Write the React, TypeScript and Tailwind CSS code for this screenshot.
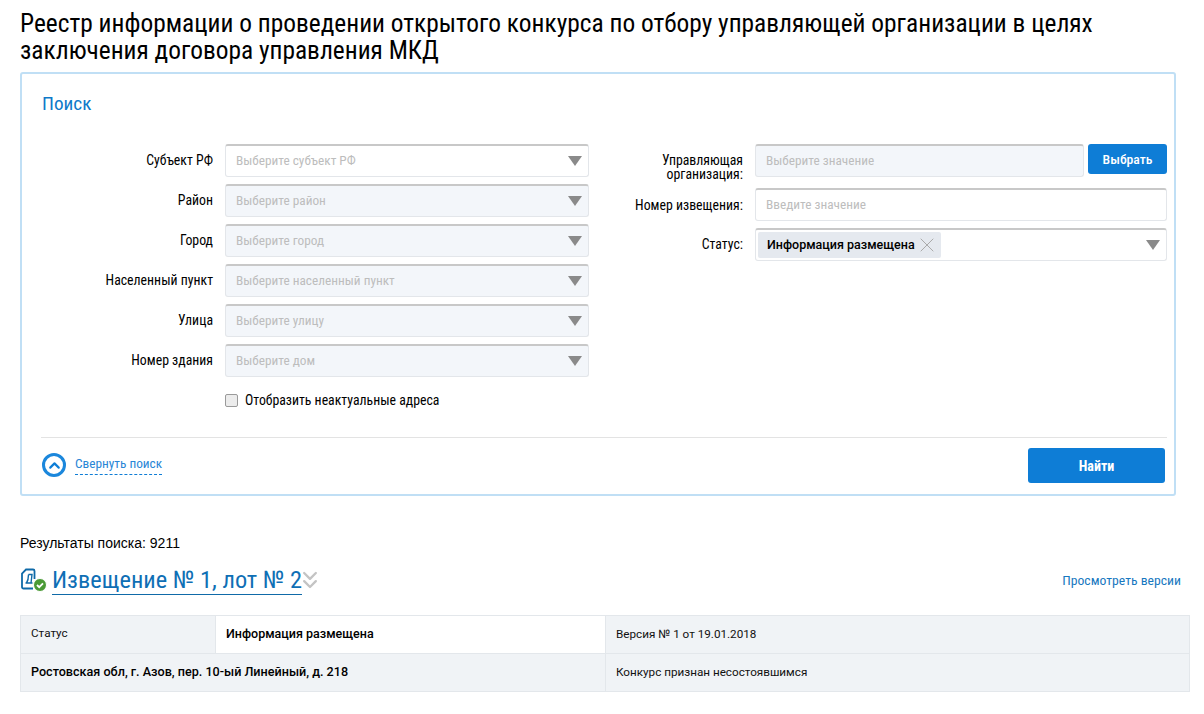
import { ChevronUp, ChevronsDown, X } from "lucide-react"

const roboto = "font-['Roboto',sans-serif] [font-stretch:75%]"

function Arrow() {
  return <span className="ml-auto mr-[6px] h-0 w-0 border-x-[7px] border-t-[10px] border-x-transparent border-t-[#8a8a8a]" />
}

function FieldLabel({ children }: { children: React.ReactNode }) {
  return <div className="w-[172px] pb-[1px] text-right text-[13.800px] leading-[14px] text-black">{children}</div>
}

function Field({ label, placeholder, disabled }: { label: string; placeholder: string; disabled?: boolean }) {
  return (
    <div className="flex h-[33px] items-center gap-[12px]">
      <FieldLabel>{label}</FieldLabel>
      <div
        className={`flex h-[33px] w-[364px] items-center rounded-[3px] border border-[#e3e6ea] border-t-2 border-t-[#c8c8c8] pl-[10px] ${
          disabled ? "bg-[#f3f6fa]" : "bg-white"
        }`}
      >
        <span className="text-[13.300px] text-[#bdbdbd]">{placeholder}</span>
        <Arrow />
      </div>
    </div>
  )
}

const fields = [
  { label: "Субъект РФ", placeholder: "Выберите субъект РФ" },
  { label: "Район", placeholder: "Выберите район", disabled: true },
  { label: "Город", placeholder: "Выберите город", disabled: true },
  { label: "Населенный пункт", placeholder: "Выберите населенный пункт", disabled: true },
  { label: "Улица", placeholder: "Выберите улицу", disabled: true },
  { label: "Номер здания", placeholder: "Выберите дом", disabled: true },
]

function NoticeIcon() {
  return (
    <svg width="27" height="24" viewBox="0 0 27 24" fill="none" className="shrink-0">
      <path d="M13 20.500H3.500a1.500 1.500 0 0 1-1.500-1.500V5.500L6 1.500h7a1.500 1.500 0 0 1 1.500 1.500V11" stroke="#0f6aa8" strokeWidth="1.800" />
      <path d="M8.500 6.500h3.500l-1 8.500M5.500 15h7M8.500 6.500c0 4-.7 6.500-2 8.500" stroke="#0f6aa8" strokeWidth="1.400" />
      <circle cx="20" cy="17" r="6.500" fill="#4a9a35" stroke="#fff" />
      <path d="M17 17l2.200 2.200L23 15.300" stroke="#fff" strokeWidth="1.800" />
    </svg>
  )
}

export default function App() {
  return (
    <div className={`min-h-[714px] bg-white px-[20px] pt-[10px] ${roboto}`}>
      <h1 className="w-[1130px] text-[25.400px] leading-[27px] text-black">
        Реестр информации о проведении открытого конкурса по отбору управляющей организации в целях заключения договора
        управления МКД
      </h1>

      <div className="mt-[8px] h-[424px] w-[1156px] rounded-[3px] border-2 border-[#c0dff5] pl-[19px] pr-[7px]">
        <div className="pl-[1px] pt-[18px] text-[19.200px] leading-[24px] text-[#0e79c9]">Поиск</div>

        <div className="mt-[28px] flex h-[294px] border-b border-[#e3e3e3]">
          <div className="flex flex-col gap-[7px]">
            {fields.map((f) => (
              <Field key={f.label} {...f} />
            ))}
            <label className="mt-[9px] flex items-center gap-[7px] pl-[184px]">
              <span className="h-[13px] w-[13px] rounded-[2px] border border-[#9a9a9a] bg-[#ececec]" />
              <span className="text-[13.800px] leading-[14px] text-black">Отобразить неактуальные адреса</span>
            </label>
          </div>

          <div className="ml-[36px] flex flex-col gap-[11px]">
            <div className="flex h-[33px] items-start gap-[12px]">
              <div className="w-[118px] pt-[9px] text-right text-[13.800px] leading-[14px] text-black">
                Управляющая организация:
              </div>
              <div className="flex h-[33px] w-[329px] items-center rounded-[3px] border border-[#e3e6ea] border-t-2 border-t-[#c8c8c8] bg-[#f3f6fa] pl-[10px]">
                <span className="text-[13.300px] text-[#bdbdbd]">Выберите значение</span>
              </div>
              <button className="-ml-[8px] h-[30px] w-[79px] rounded-[3px] bg-[#0e7dd6] text-[13.700px] font-medium text-white">
                Выбрать
              </button>
            </div>
            <div className="flex items-center gap-[12px]">
              <div className="w-[118px] text-right text-[13.800px] leading-[14px] text-black">Номер извещения:</div>
              <div className="flex h-[33px] w-[412px] items-center rounded-[3px] border border-[#e3e6ea] border-t-2 border-t-[#c8c8c8] bg-white pl-[10px]">
                <span className="text-[13.300px] text-[#bdbdbd]">Введите значение</span>
              </div>
            </div>
            <div className="-mt-[4px] flex items-center gap-[12px]">
              <div className="w-[118px] pb-[1px] text-right text-[13.800px] leading-[14px] text-black">Статус:</div>
              <div className="flex h-[33px] w-[412px] items-center rounded-[3px] border border-[#e3e6ea] border-t-2 border-t-[#c8c8c8] bg-white pl-[2px]">
                <div className="flex h-[26px] w-[183px] items-center rounded-[2px] bg-[#e5e9ef] pl-[9px]">
                  <span className="text-[12.500px] font-medium text-black [font-stretch:100%]">Информация размещена</span>
                  <X size={24} strokeWidth={1} className="text-[#aaa]" />
                </div>
                <Arrow />
              </div>
            </div>
          </div>
        </div>

        <div className="flex items-start justify-between pr-[2px] pt-[10px]">
          <div className="mt-[5px] flex items-center gap-[9px] pl-[1px]">
            <span className="flex h-[24px] w-[24px] items-center justify-center rounded-full border-[3px] border-[#1b87dc]">
              <ChevronUp size={17} strokeWidth={3} className="text-[#0e7dd6]" />
            </span>
            <span className="border-b border-dashed border-[#0e7dd6] pb-[2px] text-[13.300px] leading-[16px] text-[#2a86d6]">
              Свернуть поиск
            </span>
          </div>
          <button className="h-[35px] w-[137px] rounded-[3px] bg-[#0e7dd6] pt-[1px] text-[14px] font-bold text-white">
            Найти
          </button>
        </div>
      </div>

      <div className="mt-[39px] font-['Liberation_Sans',sans-serif] text-[14px] leading-[16px] text-black">
        Результаты поиска: 9211
      </div>

      <div className="mt-[14px] flex h-[30px] items-center">
        <NoticeIcon />
        <span className="ml-[5px] border-b border-[#0f6aa8] text-[24.400px] leading-[29px] text-[#0f6fb5]">
          Извещение № 1, лот № 2
        </span>
        <ChevronsDown size={28} strokeWidth={2} className="-ml-[6px] text-[#c4c4c4]" />
        <span className="ml-auto mr-[3px] text-[13.700px] text-[#1878c0]">Просмотреть версии</span>
      </div>

      <div className="mt-[20px] w-[1170px] border border-[#e3e7eb] text-[11.700px] text-[#111] [font-stretch:100%]">
        <div className="flex h-[38px] border-b border-[#e3e7eb]">
          <div className="flex w-[194px] items-center bg-[#f0f3f6] pb-[2px] pl-[10px]">Статус</div>
          <div className="flex w-[390px] items-center border-l border-[#e3e7eb] pl-[10px] text-[12.500px] font-medium text-black">Информация размещена</div>
          <div className="flex flex-1 items-center border-l border-[#e3e7eb] bg-[#f0f3f6] pl-[10px]">Версия № 1 от 19.01.2018</div>
        </div>
        <div className="flex h-[37px]">
          <div className="flex w-[584px] items-center bg-[#f0f3f6] pl-[10px] text-[12.600px] font-medium text-black">Ростовская обл, г. Азов, пер. 10-ый Линейный, д. 218</div>
          <div className="flex flex-1 items-center border-l border-[#e3e7eb] bg-[#f0f3f6] pl-[10px]">Конкурс признан несостоявшимся</div>
        </div>
      </div>
    </div>
  )
}
